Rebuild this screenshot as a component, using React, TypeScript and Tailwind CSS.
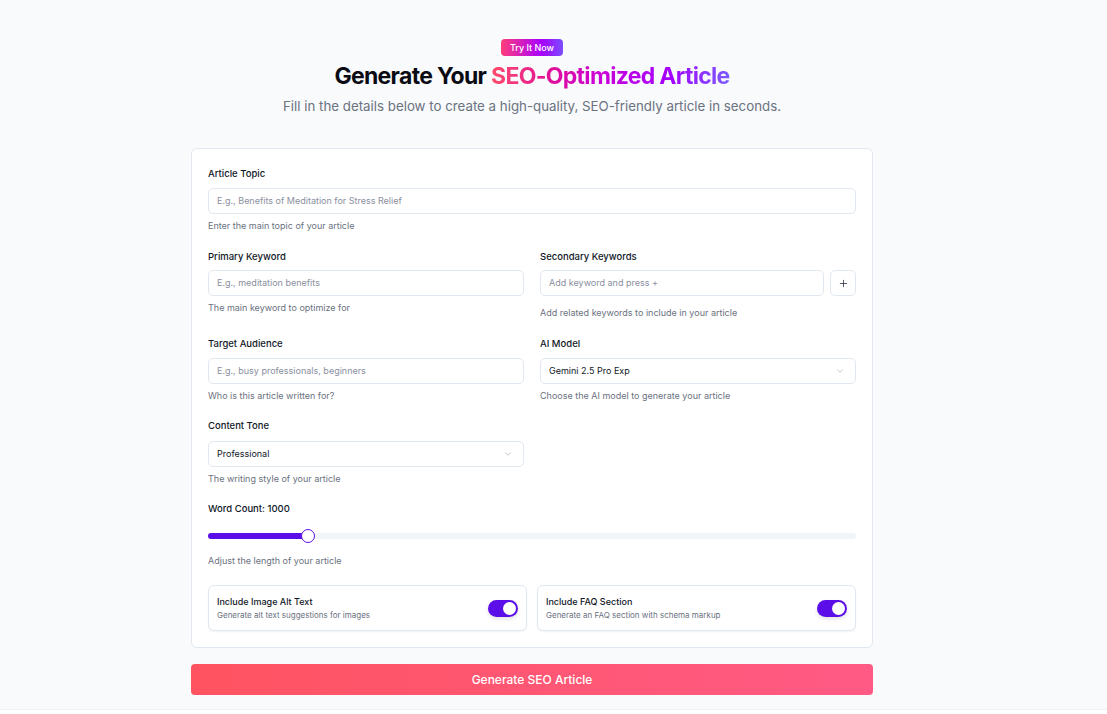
import { ChevronDown, Plus } from 'lucide-react'

function Label({ children }: { children: React.ReactNode }) {
  return <div className="h-[14px] text-[9.5px] font-medium leading-[14px] text-[#111827]">{children}</div>
}

function Helper({ children, className = '' }: { children: React.ReactNode; className?: string }) {
  return <div className={`h-[12px] text-[9px] leading-[12px] text-[#6b7280] ${className}`}>{children}</div>
}

function TextInput({ placeholder }: { placeholder: string }) {
  return (
    <div className="flex h-[26px] w-full items-center rounded-[5px] border border-[#e2e8f0] bg-white px-[8px] text-[9px] text-[#8a8fa0]">
      {placeholder}
    </div>
  )
}

function SelectBox({ value }: { value: string }) {
  return (
    <div className="flex h-[26px] w-full items-center justify-between rounded-[5px] border border-[#e2e8f0] bg-white pl-[8px] pr-[10px] text-[9px] text-[#111827]">
      <span>{value}</span>
      <ChevronDown size={10} strokeWidth={1.5} className="text-[#9ca3af]" />
    </div>
  )
}

function Toggle() {
  return (
    <div className="flex h-[17px] w-[30px] items-center justify-end rounded-full bg-[#5b0ee8] pr-[2px] shadow-[0_2px_4px_rgba(0,0,0,0.12)]">
      <div className="h-[13px] w-[13px] rounded-full bg-white" />
    </div>
  )
}

function OptionCard({ title, desc }: { title: string; desc: string }) {
  return (
    <div className="flex h-[46px] items-center justify-between rounded-[6px] border border-[#e2e8f0] bg-white px-[8px] shadow-[0_1px_2px_rgba(15,23,42,0.05)]">
      <div className="flex flex-col">
        <div className="text-[9px] font-medium leading-[12px] text-[#111827]">{title}</div>
        <div className="mt-[2px] text-[8px] leading-[10px] text-[#6b7280]">{desc}</div>
      </div>
      <Toggle />
    </div>
  )
}

export default function App() {
  return (
    <div className="min-h-[710px] border-b border-[#eef1f5] bg-[#f8fafc] font-['Inter',sans-serif]">
      <div className="w-[1064px]">
        <div className="mx-auto flex w-[682px] flex-col items-center pt-[39px]">
          <div className="flex h-[17px] w-[62px] items-center justify-center rounded-[4px] bg-[linear-gradient(90deg,#ff3d7a,#a800ff_65%,#7b4dff)] text-[9px] font-medium text-white">
            Try It Now
          </div>
          <h1 className="mt-[4px] text-[23px] font-bold leading-[32px] tracking-[-0.03em] text-[#0b0b14]">
            Generate Your{' '}
            <span className="bg-[linear-gradient(90deg,#ff4d6a,#e0109a_25%,#cc00d6_45%,#a300ff_75%,#7b5cff)] bg-clip-text text-transparent">
              SEO-Optimized Article
            </span>
          </h1>
          <p className="mt-[5px] text-[13.3px] leading-[18px] text-[#6b7280]">
            Fill in the details below to create a high-quality, SEO-friendly article in seconds.
          </p>
        </div>

        <div className="mx-auto mt-[33px] w-[682px] rounded-[6px] border border-[#e2e8f0] bg-white px-[16px] pb-[16px] pt-[18px]">
          <div className="flex flex-col">
            <Label>Article Topic</Label>
            <div className="mt-[7px]">
              <TextInput placeholder="E.g., Benefits of Meditation for Stress Relief" />
            </div>
            <Helper className="mt-[6px]">Enter the main topic of your article</Helper>
          </div>

          <div className="mt-[18px] grid grid-cols-2 gap-x-[16px]">
            <div className="flex flex-col">
              <Label>Primary Keyword</Label>
              <div className="mt-[6px]">
                <TextInput placeholder="E.g., meditation benefits" />
              </div>
              <Helper className="mt-[6px]">The main keyword to optimize for</Helper>
            </div>
            <div className="flex flex-col">
              <Label>Secondary Keywords</Label>
              <div className="mt-[6px] flex gap-[6px]">
                <TextInput placeholder="Add keyword and press +" />
                <div className="flex h-[26px] w-[26px] shrink-0 items-center justify-center rounded-[5px] border border-[#e2e8f0] bg-white text-[#111827]">
                  <Plus size={11} strokeWidth={1.5} />
                </div>
              </div>
              <Helper className="mt-[11px]">Add related keywords to include in your article</Helper>
            </div>
          </div>

          <div className="mt-[18px] grid grid-cols-2 gap-x-[16px]">
            <div className="flex flex-col">
              <Label>Target Audience</Label>
              <div className="mt-[7px]">
                <TextInput placeholder="E.g., busy professionals, beginners" />
              </div>
              <Helper className="mt-[6px]">Who is this article written for?</Helper>
            </div>
            <div className="flex flex-col">
              <Label>AI Model</Label>
              <div className="mt-[7px]">
                <SelectBox value="Gemini 2.5 Pro Exp" />
              </div>
              <Helper className="mt-[6px]">Choose the AI model to generate your article</Helper>
            </div>
          </div>

          <div className="mt-[17px] grid grid-cols-2 gap-x-[16px]">
            <div className="flex flex-col">
              <Label>Content Tone</Label>
              <div className="mt-[8px]">
                <SelectBox value="Professional" />
              </div>
              <Helper className="mt-[6px]">The writing style of your article</Helper>
            </div>
          </div>

          <div className="mt-[17px] flex flex-col">
            <Label>Word Count: 1000</Label>
            <div className="relative mt-[10px] flex h-[20px] items-center">
              <div className="h-[6px] w-full rounded-full bg-[#f1f5f9]">
                <div className="h-full w-[15.5%] rounded-full bg-[#5b0ee8]" />
              </div>
              <div className="absolute left-[15.5%] top-1/2 h-[14px] w-[14px] -translate-x-1/2 -translate-y-1/2 rounded-full border-[1.5px] border-[#5b0ee8] bg-white" />
            </div>
            <Helper className="mt-[9px]">Adjust the length of your article</Helper>
          </div>

          <div className="mt-[18px] grid grid-cols-2 gap-x-[10px]">
            <OptionCard title="Include Image Alt Text" desc="Generate alt text suggestions for images" />
            <OptionCard title="Include FAQ Section" desc="Generate an FAQ section with schema markup" />
          </div>
        </div>

        <div className="mx-auto mt-[16px] flex h-[31px] w-[682px] items-center justify-center rounded-[4px] bg-gradient-to-r from-[#ff5360] to-[#ff5a85] text-[12px] font-medium text-white">
          Generate SEO Article
        </div>
      </div>
    </div>
  )
}
